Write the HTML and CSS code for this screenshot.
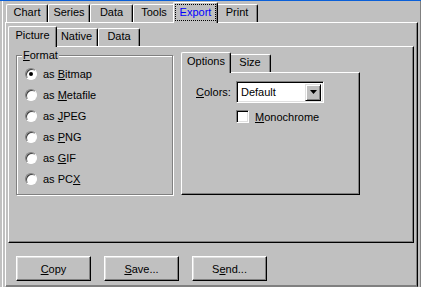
FILE: index.html
```html
<!DOCTYPE html>
<html lang="en">
<head>
	<meta charset="UTF-8">
	<title>Export</title>
	<link rel="stylesheet" href="styles.css">
</head>
<body>
	<div class="window">
		<div class="frame">
			<div class="tabctl">
				<div class="tabs">
					<div class="tab" style="width:42px">Chart</div>
					<div class="tab" style="width:42px">Series</div>
					<div class="tab" style="width:43px">Data</div>
					<div class="tab" style="width:42px">Tools</div>
					<div class="tab sel" style="width:45px"><span class="focus">Export</span></div>
					<div class="tab" style="width:42px">Print</div>
				</div>
				<div class="panel outer">
					<div class="tabs inner-tabs">
						<div class="tab sel" style="width:49px">Picture</div>
						<div class="tab" style="width:43px">Native</div>
						<div class="tab" style="width:42px">Data</div>
					</div>
					<div class="panel picture">
						<div class="group">
							<div class="legend"><u>F</u>ormat</div>
							<div class="radio checked"><span class="dot"></span><span>as <u>B</u>itmap</span></div>
							<div class="radio"><span class="dot"></span><span>as <u>M</u>etafile</span></div>
							<div class="radio"><span class="dot"></span><span>as <u>J</u>PEG</span></div>
							<div class="radio"><span class="dot"></span><span>as <u>P</u>NG</span></div>
							<div class="radio"><span class="dot"></span><span>as <u>G</u>IF</span></div>
							<div class="radio"><span class="dot"></span><span>as PC<u>X</u></span></div>
						</div>
						<div class="subctl">
							<div class="tabs sub-tabs">
								<div class="tab sel" style="width:50px">Options</div>
								<div class="tab" style="width:42px">Size</div>
							</div>
							<div class="panel options">
								<div class="row">
									<span class="lbl"><u>C</u>olors:</span>
									<div class="combo">
										<span class="combo-text">Default</span>
										<span class="drop"><svg width="7" height="4" viewBox="0 0 7 4"><path d="M0 0h7L3.5 4z" fill="#000"/></svg></span>
									</div>
								</div>
								<div class="check"><span class="box"></span><span><u>M</u>onochrome</span></div>
							</div>
						</div>
					</div>
					<div class="buttons">
						<div class="btn"><span><u>C</u>opy</span></div>
						<div class="btn"><span><u>S</u>ave...</span></div>
						<div class="btn"><span>S<u>e</u>nd...</span></div>
					</div>
				</div>
			</div>
		</div>
	</div>
</body>
</html>
```
FILE: styles.css
```css
body {
	margin: 0;
	background: #c0c0c0;
	font-family: "Liberation Sans", Arial, sans-serif;
	font-size: 11px;
	color: #000;
}

u {
	text-decoration: underline;
	text-underline-offset: 1px;
}

.window {
	width: 421px;
	height: 287px;
	box-sizing: border-box;
	border-top: 1px solid #0a5fd8;
	padding-left: 2px;
	display: flex;
}

.frame {
	flex: 1;
	border-left: 1px solid #fff;
	border-right: 1px solid #808080;
	padding: 0 2px;
	display: flex;
}

.tabctl {
	flex: 1;
	display: flex;
	flex-direction: column;
}

/* tab strips */
.tabs {
	display: flex;
	align-items: flex-end;
	height: 21px;
	padding-left: 1px;
}

.tab {
	height: 18px;
	box-sizing: border-box;
	border: 1px solid;
	border-color: #fff #000 transparent #fff;
	border-bottom: none;
	border-radius: 2px 2px 0 0;
	box-shadow: inset -1px 0 #808080;
	background: #c0c0c0;
	text-align: center;
	line-height: 15px;
	white-space: nowrap;
}

.tab.sel {
	height: 21px;
	margin: 0 -2px -1px;
	padding-top: 1px;
	position: relative;
	z-index: 1;
}

.focus {
	display: block;
	height: 17px;
	box-sizing: border-box;
	margin: 0 1px;
	border: 1px dotted #000;
	line-height: 14px;
	color: #0000ff;
}

/* panels */
.panel {
	border: 1px solid;
	border-color: #fff #000 #000 #fff;
	box-shadow: inset -1px -1px #808080;
}

.outer {
	flex: 1;
	border-bottom-color: #808080;
	padding: 0 3px 0 2px;
}

.inner-tabs {
	height: 23px;
	padding-left: 2px;
}

.picture {
	height: 197px;
	box-sizing: border-box;
	display: flex;
	align-items: flex-start;
	padding-left: 7px;
}

/* group box */
.group {
	width: 157px;
	height: 140px;
	box-sizing: border-box;
	margin-top: 8px;
	border: 1px solid #808080;
	box-shadow: inset 1px 1px #fff, 1px 1px #fff;
	padding: 0 0 0 8px;
}

.legend {
	display: table;
	height: 13px;
	margin: -7px 0 1px -3px;
	padding: 0 1px;
	background: #c0c0c0;
	line-height: 13px;
}

.radio {
	display: flex;
	align-items: center;
	height: 21px;
}

.dot {
	width: 12px;
	height: 12px;
	box-sizing: border-box;
	border-radius: 50%;
	border: 1px solid;
	border-color: #808080 #fff #fff #808080;
	box-shadow: inset 1px 1px #404040;
	background: #fff;
	margin-right: 6px;
	display: flex;
	align-items: center;
	justify-content: center;
}

.checked .dot::after {
	content: "";
	width: 4px;
	height: 4px;
	border-radius: 50%;
	background: #000;
}

/* options tab control */
.subctl {
	margin: 4px 0 0 8px;
}

.sub-tabs {
	padding-left: 2px;
}

.options {
	width: 179px;
	height: 123px;
	box-sizing: border-box;
	padding: 8px 0 0 14px;
}

.row {
	display: flex;
	align-items: center;
}

.lbl {
	width: 40px;
}

.combo {
	width: 88px;
	height: 22px;
	box-sizing: border-box;
	border: 1px solid;
	border-color: #808080 #fff #fff #808080;
	box-shadow: inset 1px 1px #000, inset -1px -1px #dfdfdf;
	background: #fff;
	display: flex;
	align-items: center;
	padding: 0 2px 0 4px;
}

.combo-text {
	flex: 1;
}

.drop {
	width: 16px;
	height: 17px;
	box-sizing: border-box;
	border: 1px solid;
	border-color: #dfdfdf #000 #000 #dfdfdf;
	box-shadow: inset 1px 1px #fff, inset -1px -1px #808080;
	background: #c0c0c0;
	display: flex;
	align-items: center;
	justify-content: center;
}

.check {
	display: flex;
	align-items: center;
	margin: 7px 0 0 40px;
}

.box {
	width: 13px;
	height: 13px;
	box-sizing: border-box;
	border: 1px solid;
	border-color: #808080 #fff #fff #808080;
	box-shadow: inset 1px 1px #000, inset -1px -1px #dfdfdf;
	background: #fff;
	margin-right: 6px;
}

/* bottom buttons */
.buttons {
	display: flex;
	gap: 13px;
	margin: 13px 0 0 8px;
}

.btn {
	width: 75px;
	height: 25px;
	box-sizing: border-box;
	border: 1px solid;
	border-color: #fff #000 #000 #fff;
	box-shadow: inset -1px -1px #808080, inset 1px 1px #dfdfdf;
	display: flex;
	align-items: center;
	justify-content: center;
}
```
